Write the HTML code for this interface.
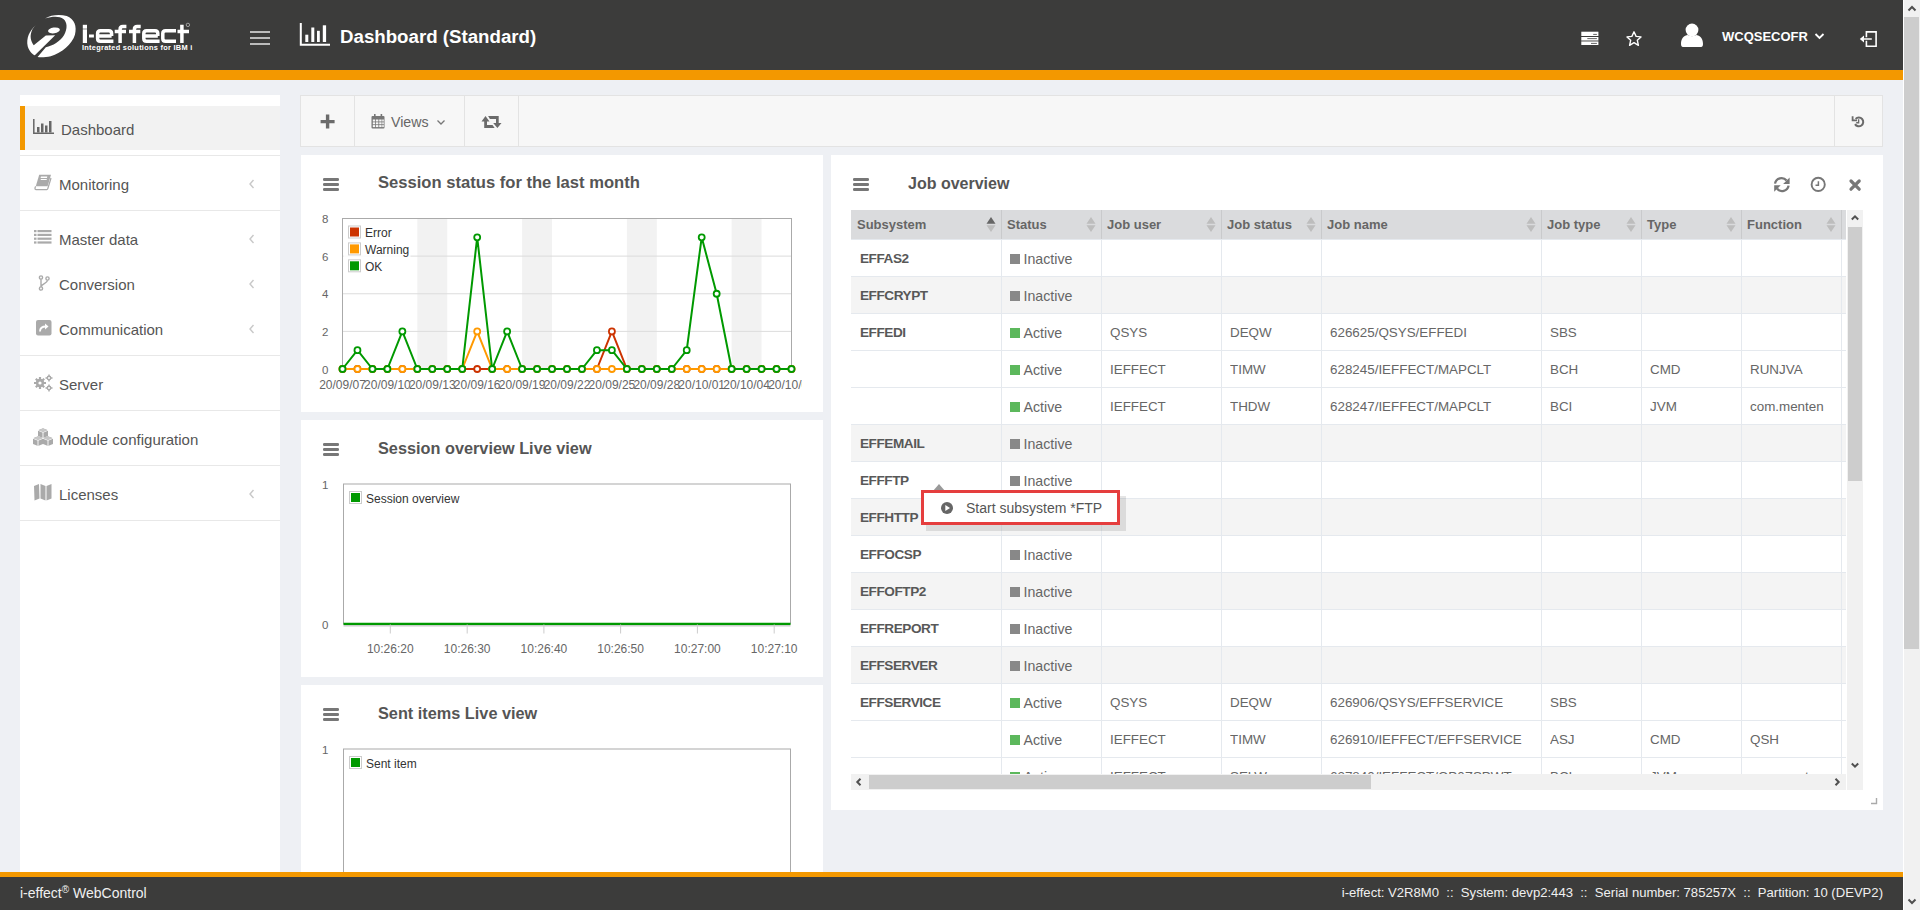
<!DOCTYPE html>
<html><head><meta charset="utf-8">
<style>
*{box-sizing:border-box;margin:0;padding:0}
html,body{width:1920px;height:910px;overflow:hidden}
body{font-family:"Liberation Sans",sans-serif;background:#eef0f4;position:relative;color:#555}
.a{position:absolute}
#hdr{left:0;top:0;width:1903px;height:70px;background:#3c3c3b}
#obar{left:0;top:70px;width:1903px;height:10px;background:#f39800}
#vsb{left:1903px;top:0;width:17px;height:910px;background:#f1f1f1;border-left:1px solid #fff}
#vsb .th{left:0;top:17px;width:15px;height:632px;background:#cdcdcd}
.ttl{color:#fff;font-weight:bold;white-space:nowrap}
#side{left:20px;top:95px;width:260px;height:782px;background:#fff}
.si{position:absolute;left:0;width:260px;font-size:15px;color:#555;white-space:nowrap;margin-top:1.5px}
.sep{position:absolute;left:0;width:260px;height:1px;background:#e8e8e8}
.chev{position:absolute;left:227px;color:#c8c8c8;margin-top:3px}
#tb{left:300px;top:95px;width:1583px;height:52px;background:#f7f7f7;border:1px solid #e3e3e3}
.dv{position:absolute;top:0;width:1px;height:50px;background:#e3e3e3}
.pnl{background:#fff}
.ptl{position:absolute;font-size:17px;font-weight:bold;color:#555;white-space:nowrap}
.ham{position:absolute;width:16px;height:13px}
.ham i{position:absolute;left:0;width:16px;height:2.6px;background:#777;border-radius:1.3px}
#ftr{left:0;top:877px;width:1903px;height:33px;background:#3c3c3b;color:#f0f0f0;font-size:14px}
#fbar{left:0;top:872px;width:1903px;height:5px;background:#f39800}
</style></head><body>
<div id="hdr" class="a">
<svg class="a" style="left:20px;top:10px" width="70" height="50" viewBox="0 0 1274 910">
<path fill="#fff" d="M290,275 C170,380 110,520 140,660 C170,760 230,810 270,825 L640,460 L470,462 L250,640 C190,560 180,470 210,390 C230,340 260,300 290,275 Z"/>
<path fill="#fff" d="M455,155 C560,90 720,75 850,110 C990,160 1040,300 1000,450 C950,620 760,780 560,840 C470,860 380,865 320,855 L470,680 C600,650 730,570 800,460 C870,340 860,220 790,165 C720,110 600,110 455,155 Z"/>
<ellipse fill="#fff" cx="618" cy="372" rx="108" ry="52" transform="rotate(-8 618 372)"/>
</svg>
<svg class="a" style="left:75px;top:15px" width="125" height="40" viewBox="75 15 125 40">
<g fill="#fff"><rect x="82.8" y="24.8" width="4.2" height="3.9"/><rect x="82.8" y="29.3" width="4.2" height="13.7"/><rect x="89" y="34.5" width="4.9" height="3"/></g>
<g stroke="#fff" stroke-width="3.5" fill="none" stroke-linejoin="round">
<path d="M111.6,36 V33.6 Q111.6,30.8 108.8,30.8 H100.4 Q97.6,30.8 97.6,33.6 V38.4 Q97.6,41.2 100.4,41.2 H113.4 M97.6,36 H111.6"/>
<path d="M120.1,43 V29.4 Q120.1,26.6 122.9,26.6 H126.4 M114.7,31.5 H126"/>
<path d="M134.4,43 V29.4 Q134.4,26.6 137.2,26.6 H140.7 M129,31.5 H140.3"/>
<path d="M157.8,36 V33.6 Q157.8,30.8 155,30.8 H146.6 Q143.8,30.8 143.8,33.6 V38.4 Q143.8,41.2 146.6,41.2 H159.6 M143.8,36 H157.8"/>
<path d="M176,30.8 H165.6 Q162.8,30.8 162.8,33.6 V38.4 Q162.8,41.2 165.6,41.2 H176"/>
<path d="M181.9,24.8 V43 M177.5,31.4 H189"/>
</g>
<circle cx="187.9" cy="24.9" r="1.7" stroke="#ddd" stroke-width="0.6" fill="none"/>
</svg>
<div class="a ttl" style="left:82px;top:43.5px;font-size:6.6px;letter-spacing:0.25px;transform:scaleX(1.12);transform-origin:0 0">Integrated solutions for IBM i</div>
<div class="a" style="left:250px;top:30.5px;width:20px;height:2px;background:#bbb"></div>
<div class="a" style="left:250px;top:36.5px;width:20px;height:2px;background:#bbb"></div>
<div class="a" style="left:250px;top:42.5px;width:20px;height:2px;background:#bbb"></div>
<svg class="a" style="left:299px;top:22px" width="32" height="25" viewBox="0 0 32 25">
<path d="M1.8 1 V22.7 H31" stroke="#fff" stroke-width="2" fill="none"/>
<rect x="6.3" y="12.7" width="3" height="7.3" fill="#fff"/><rect x="12.3" y="5.5" width="3" height="14.5" fill="#fff"/><rect x="18" y="8.8" width="2.8" height="11.2" fill="#fff"/><rect x="23.8" y="3.3" width="3.3" height="16.7" fill="#fff"/>
</svg>
<div class="a ttl" style="left:340px;top:25.5px;font-size:18.7px">Dashboard (Standard)</div>
<svg class="a" style="left:1581px;top:31px" width="18" height="15" viewBox="0 0 18 15">
<rect x="0.3" y="0.7" width="17.1" height="4.3" fill="#fff"/><rect x="0.3" y="6" width="17.1" height="3.1" fill="#fff"/><rect x="0.3" y="9.1" width="17.1" height="1.8" fill="#aaa"/><rect x="0.3" y="10.9" width="17.1" height="3.1" fill="#fff"/>
<rect x="12.2" y="2.9" width="3.7" height="1" fill="#666"/><rect x="6.3" y="7.1" width="9.6" height="1" fill="#666"/><rect x="10" y="11.9" width="5.9" height="1" fill="#666"/>
</svg>
<svg class="a" style="left:1625px;top:30px" width="18" height="17" viewBox="0 0 18 17">
<path d="M9 1.8 L11.1 6.4 L16 6.9 L12.3 10.2 L13.4 15.3 L9 12.6 L4.6 15.3 L5.7 10.2 L2 6.9 L6.9 6.4 Z" stroke="#fff" stroke-width="1.4" fill="none" stroke-linejoin="round"/>
</svg>
<svg class="a" style="left:1680px;top:23px" width="24" height="25" viewBox="0 0 24 25">
<circle cx="12" cy="7" r="6.4" fill="#fff"/>
<path d="M1 21 C1 15 4 12.5 8 12 C10 13.5 14 13.5 16 12 C20 12.5 23 15 23 21 C23 23.5 22 24 20 24 H4 C2 24 1 23.5 1 21 Z" fill="#fff"/>
</svg>
<div class="a ttl" style="left:1722px;top:28.5px;font-size:13px">WCQSECOFR</div>
<svg class="a" style="left:1814px;top:32px" width="11" height="8" viewBox="0 0 11 8"><path d="M1.5 2 L5.5 6 L9.5 2" stroke="#fff" stroke-width="1.8" fill="none"/></svg>
<svg class="a" style="left:1859px;top:30px" width="19" height="18" viewBox="0 0 19 18">
<path d="M7.4,7.2 V1.9 H17.1 V16.2 H7.4 V10.8" stroke="#fff" stroke-width="1.6" fill="none"/>
<path d="M0.8,9 L5,5.4 V12.6 Z" fill="#fff"/><rect x="4.5" y="8.1" width="8.3" height="1.8" fill="#ddd"/>
</svg>
</div>
<div id="obar" class="a"></div>
<div id="vsb" class="a"><div class="a th"></div>
<svg class="a" style="left:2px;top:4px" width="12" height="9" viewBox="0 0 12 9"><path d="M2.5 6.5 L6 3 L9.5 6.5" stroke="#505050" stroke-width="2" fill="none"/></svg>
<svg class="a" style="left:2px;top:897px" width="12" height="9" viewBox="0 0 12 9"><path d="M2.5 2.5 L6 6 L9.5 2.5" stroke="#505050" stroke-width="2" fill="none"/></svg>
</div>

<div id="side" class="a">
<div class="a" style="left:0;top:11px;width:260px;height:44px;background:#f2f2f2;border-left:5px solid #f39800"></div>
<div class="sep" style="top:60px"></div>
<div class="sep" style="top:115px"></div>
<div class="sep" style="top:260px"></div>
<div class="sep" style="top:315px"></div>
<div class="sep" style="top:370px"></div>
<div class="sep" style="top:425px"></div>
<svg class="a" style="left:13px;top:24px" width="21" height="15" viewBox="0 0 21 15">
<path d="M0.8 0 V14.2 H21" stroke="#666" stroke-width="1.5" fill="none"/>
<rect x="4" y="8" width="2.5" height="5.5" fill="#666"/><rect x="8" y="4.5" width="2.5" height="9" fill="#666"/><rect x="12" y="6.5" width="2.5" height="7" fill="#666"/><rect x="16" y="2" width="2.5" height="11.5" fill="#666"/>
</svg>
<div class="si" style="top:24px;left:41px">Dashboard</div>
<svg class="a" style="left:14px;top:79px" width="18" height="17" viewBox="0 0 18 17">
<path d="M5.2,0.8 H17 L13.6,12.2 H1.8 Z" fill="#aaa"/>
<path d="M2,12.6 C0.6,12.8 0.6,15.6 2,15.6 H12.8 C13.3,15.6 13.6,15.2 13.8,14.6 L17,4" stroke="#aaa" stroke-width="1.3" fill="none"/>
<rect x="7.6" y="2.6" width="6.4" height="1.3" fill="#fff" transform="skewX(-15)"/><rect x="8.2" y="5" width="6" height="1" fill="#fff" transform="skewX(-15)"/>
</svg>
<div class="si" style="top:79px;left:39px">Monitoring</div><div class="chev" style="top:79px"><svg width="10" height="14" viewBox="0 0 10 14"><path d="M6.5 3 L3 7 L6.5 11" stroke="#c8c8c8" stroke-width="1.4" fill="none"/></svg></div>
<svg class="a" style="left:14px;top:135px" width="18" height="14" viewBox="0 0 18 14">
<g fill="#aaa"><rect x="0" y="0" width="2.5" height="2.2"/><rect x="3.5" y="0" width="14" height="2.2"/><rect x="0" y="3.8" width="2.5" height="2.2"/><rect x="3.5" y="3.8" width="14" height="2.2"/><rect x="0" y="7.6" width="2.5" height="2.2"/><rect x="3.5" y="7.6" width="14" height="2.2"/><rect x="0" y="11.4" width="2.5" height="2.2"/><rect x="3.5" y="11.4" width="14" height="2.2"/></g>
</svg>
<div class="si" style="top:134px;left:39px">Master data</div><div class="chev" style="top:134px"><svg width="10" height="14" viewBox="0 0 10 14"><path d="M6.5 3 L3 7 L6.5 11" stroke="#c8c8c8" stroke-width="1.4" fill="none"/></svg></div>
<svg class="a" style="left:17.5px;top:179.5px" width="12" height="16" viewBox="0 0 12 16">
<g stroke="#aaa" stroke-width="1.4" fill="none"><circle cx="3" cy="2.5" r="1.6"/><circle cx="3" cy="13.5" r="1.6"/><circle cx="9.5" cy="3.5" r="1.6"/><path d="M3 4.2 V11.8 M9.5 5.2 C9.5 8.5 3.5 8.5 3 11.8"/></g>
</svg>
<div class="si" style="top:179px;left:39px">Conversion</div><div class="chev" style="top:179px"><svg width="10" height="14" viewBox="0 0 10 14"><path d="M6.5 3 L3 7 L6.5 11" stroke="#c8c8c8" stroke-width="1.4" fill="none"/></svg></div>
<svg class="a" style="left:15.5px;top:225px" width="16" height="16" viewBox="0 0 16 16">
<rect x="0" y="0" width="15.5" height="15.5" rx="2" fill="#aaa"/>
<path d="M4 11.5 C4 7.5 6.5 6.5 10 6.5" stroke="#fff" stroke-width="1.8" fill="none"/><path d="M9 3.5 L12.5 6.5 L9 9.5 Z" fill="#fff"/>
</svg>
<div class="si" style="top:224px;left:39px">Communication</div><div class="chev" style="top:224px"><svg width="10" height="14" viewBox="0 0 10 14"><path d="M6.5 3 L3 7 L6.5 11" stroke="#c8c8c8" stroke-width="1.4" fill="none"/></svg></div>
<svg class="a" style="left:13px;top:279px" width="20" height="18" viewBox="0 0 20 18">
<g fill="#aaa"><circle cx="7" cy="9" r="4.2"/><circle cx="16" cy="4" r="2.4"/><circle cx="16" cy="14" r="2.4"/></g>
<g stroke="#aaa" stroke-width="2.2"><path d="M7 3 V15 M1 9 H13 M2.8 4.8 L11.2 13.2 M11.2 4.8 L2.8 13.2"/><path d="M16 0.5 V7.5 M12.5 4 H19.5 M16 10.5 V17.5 M12.5 14 H19.5" stroke-width="1.4"/></g>
<g fill="#fff"><circle cx="7" cy="9" r="1.6"/><circle cx="16" cy="4" r="1"/><circle cx="16" cy="14" r="1"/></g>
</svg>
<div class="si" style="top:279px;left:39px">Server</div>
<svg class="a" style="left:12px;top:333px" width="22" height="19" viewBox="0 0 22 19">
<g fill="#aaa"><path d="M6,2.3 L11,0.3 L16,2.3 V8 L11,10 L6,8 Z"/><path d="M1,10.3 L6,8.3 L11,10.3 V16 L6,18 L1,16 Z"/><path d="M11,10.3 L16,8.3 L21,10.3 V16 L16,18 L11,16 Z"/></g>
<g stroke="#fff" stroke-width="0.9" fill="none"><path d="M6,2.3 L11,4.3 L16,2.3 M11,4.3 V10"/><path d="M1,10.3 L6,12.3 L11,10.3 M6,12.3 V18"/><path d="M11,10.3 L16,12.3 L21,10.3 M16,12.3 V18"/></g>
<g fill="#c8c8c8"><path d="M6.4,2.3 L11,0.6 L15.6,2.3 L11,4 Z"/><path d="M1.4,10.3 L6,8.6 L10.6,10.3 L6,12 Z"/><path d="M11.4,10.3 L16,8.6 L20.6,10.3 L16,12 Z"/></g>
</svg>
<div class="si" style="top:334px;left:39px">Module configuration</div>
<svg class="a" style="left:14px;top:389px" width="18" height="17" viewBox="0 0 18 17">
<path d="M0 2 L5 0 L5.5 14.5 L0.5 16.5 Z M6.5 0 L11.5 2 V16.5 L6.5 14.5 Z M12.5 2 L17.5 0 V14.5 L12.5 16.5 Z" fill="#aaa"/>
</svg>
<div class="si" style="top:389px;left:39px">Licenses</div><div class="chev" style="top:389px"><svg width="10" height="14" viewBox="0 0 10 14"><path d="M6.5 3 L3 7 L6.5 11" stroke="#c8c8c8" stroke-width="1.4" fill="none"/></svg></div>
</div>
<div id="tb" class="a">
<div class="dv" style="left:53px"></div><div class="dv" style="left:163px"></div><div class="dv" style="left:217px"></div><div class="dv" style="left:1533px"></div>
<svg class="a" style="left:19px;top:17.5px" width="16" height="16" viewBox="0 0 16 16"><path d="M5.9 0.6 H9.3 V5.9 H14.6 V9.3 H9.3 V14.6 H5.9 V9.3 H0.6 V5.9 H5.9 Z" fill="#6b6b6b"/></svg>
<svg class="a" style="left:70px;top:18px" width="15" height="15" viewBox="0 0 15 15">
<g fill="#777"><rect x="0.5" y="2" width="13" height="12.5" rx="1"/></g>
<g fill="#f7f7f7"><rect x="1.8" y="5.5" width="2.4" height="2"/><rect x="5" y="5.5" width="2.4" height="2"/><rect x="8.2" y="5.5" width="2.4" height="2"/><rect x="11.2" y="5.5" width="1.6" height="2"/>
<rect x="1.8" y="8.3" width="2.4" height="2"/><rect x="5" y="8.3" width="2.4" height="2"/><rect x="8.2" y="8.3" width="2.4" height="2"/><rect x="11.2" y="8.3" width="1.6" height="2"/>
<rect x="1.8" y="11.1" width="2.4" height="2"/><rect x="5" y="11.1" width="2.4" height="2"/><rect x="8.2" y="11.1" width="2.4" height="2"/><rect x="11.2" y="11.1" width="1.6" height="2"/></g>
<g fill="#777"><rect x="3" y="0" width="1.6" height="3.5"/><rect x="9.6" y="0" width="1.6" height="3.5"/></g>
</svg>
<div class="a" style="left:90px;top:17.7px;font-size:14.2px;color:#666;white-space:nowrap">Views</div>
<svg class="a" style="left:135px;top:22.7px" width="10" height="7" viewBox="0 0 10 7"><path d="M1.5 1.5 L5 5 L8.5 1.5" stroke="#777" stroke-width="1.3" fill="none"/></svg>
<svg class="a" style="left:180px;top:18px" width="22" height="15" viewBox="0 0 22 15">
<path d="M4.5,2 L8.5,7.5 H6 V11 H11.5 L13.7,13.9 H3.2 V7.5 H0.5 Z" fill="#6b6b6b"/>
<path d="M7.1,2 H17.7 V9.1 H20.5 L16.4,13.9 L12.2,9.1 H15 V4.9 H8.9 Z" fill="#6b6b6b"/>
</svg>
<svg class="a" style="left:1549px;top:18px" width="15" height="15" viewBox="0 0 15 15">
<path d="M5.6,4.9 A4.4,4.4 0 1 1 5.04,10.12" stroke="#6b6b6b" stroke-width="2" fill="none"/>
<path d="M2.6,2.2 V6.3 H7" stroke="#6b6b6b" stroke-width="1.8" fill="none"/>
<path d="M8.6,5.2 V8.7 H6.2" stroke="#6b6b6b" stroke-width="1.4" fill="none"/>
</svg>
</div>

<!--PANELS-->
<div class="a pnl" style="left:301px;top:155px;width:522px;height:257px"></div>
<svg class="a" style="left:301px;top:155px" width="522" height="257" viewBox="301 155 522 257" font-family="Liberation Sans" >
<defs><clipPath id="xc"><rect x="301" y="370" width="501" height="30"/></clipPath></defs>
<rect x="417.33" y="218.5" width="29.93" height="150.5" fill="#f2f2f2"/>
<rect x="522.10" y="218.5" width="29.93" height="150.5" fill="#f2f2f2"/>
<rect x="626.87" y="218.5" width="29.93" height="150.5" fill="#f2f2f2"/>
<rect x="731.63" y="218.5" width="29.93" height="150.5" fill="#f2f2f2"/>
<line x1="342.5" x2="791.5" y1="331.38" y2="331.38" stroke="#dcdcdc" stroke-width="1"/>
<line x1="342.5" x2="791.5" y1="293.75" y2="293.75" stroke="#dcdcdc" stroke-width="1"/>
<line x1="342.5" x2="791.5" y1="256.12" y2="256.12" stroke="#dcdcdc" stroke-width="1"/>
<rect x="342.5" y="218.5" width="449.0" height="150.5" fill="none" stroke="#aaa" stroke-width="1"/>
<text x="328.5" y="373.50" text-anchor="end" font-size="11.5" fill="#666">0</text>
<text x="328.5" y="335.88" text-anchor="end" font-size="11.5" fill="#666">2</text>
<text x="328.5" y="298.25" text-anchor="end" font-size="11.5" fill="#666">4</text>
<text x="328.5" y="260.62" text-anchor="end" font-size="11.5" fill="#666">6</text>
<text x="328.5" y="223.00" text-anchor="end" font-size="11.5" fill="#666">8</text>
<text x="342.50" y="389" text-anchor="middle" font-size="12" fill="#666" clip-path="url(#xc)">20/09/07</text>
<text x="387.40" y="389" text-anchor="middle" font-size="12" fill="#666" clip-path="url(#xc)">20/09/10</text>
<text x="432.30" y="389" text-anchor="middle" font-size="12" fill="#666" clip-path="url(#xc)">20/09/13</text>
<text x="477.20" y="389" text-anchor="middle" font-size="12" fill="#666" clip-path="url(#xc)">20/09/16</text>
<text x="522.10" y="389" text-anchor="middle" font-size="12" fill="#666" clip-path="url(#xc)">20/09/19</text>
<text x="567.00" y="389" text-anchor="middle" font-size="12" fill="#666" clip-path="url(#xc)">20/09/22</text>
<text x="611.90" y="389" text-anchor="middle" font-size="12" fill="#666" clip-path="url(#xc)">20/09/25</text>
<text x="656.80" y="389" text-anchor="middle" font-size="12" fill="#666" clip-path="url(#xc)">20/09/28</text>
<text x="701.70" y="389" text-anchor="middle" font-size="12" fill="#666" clip-path="url(#xc)">20/10/01</text>
<text x="746.60" y="389" text-anchor="middle" font-size="12" fill="#666" clip-path="url(#xc)">20/10/04</text>
<text x="791.50" y="389" text-anchor="middle" font-size="12" fill="#666" clip-path="url(#xc)">20/10/07</text>
<polyline points="342.50,369.00 357.47,369.00 372.43,369.00 387.40,369.00 402.37,369.00 417.33,369.00 432.30,369.00 447.27,369.00 462.23,369.00 477.20,369.00 492.17,369.00 507.13,369.00 522.10,369.00 537.07,369.00 552.03,369.00 567.00,369.00 581.97,369.00 596.93,369.00 611.90,331.38 626.87,369.00 641.83,369.00 656.80,369.00 671.77,369.00 686.73,369.00 701.70,369.00 716.67,369.00 731.63,369.00 746.60,369.00 761.57,369.00 776.53,369.00 791.50,369.00" fill="none" stroke="#cc3300" stroke-width="2" stroke-linejoin="round"/>
<circle cx="342.50" cy="369.00" r="3" fill="#fff" stroke="#cc3300" stroke-width="1.8"/>
<circle cx="357.47" cy="369.00" r="3" fill="#fff" stroke="#cc3300" stroke-width="1.8"/>
<circle cx="372.43" cy="369.00" r="3" fill="#fff" stroke="#cc3300" stroke-width="1.8"/>
<circle cx="387.40" cy="369.00" r="3" fill="#fff" stroke="#cc3300" stroke-width="1.8"/>
<circle cx="402.37" cy="369.00" r="3" fill="#fff" stroke="#cc3300" stroke-width="1.8"/>
<circle cx="417.33" cy="369.00" r="3" fill="#fff" stroke="#cc3300" stroke-width="1.8"/>
<circle cx="432.30" cy="369.00" r="3" fill="#fff" stroke="#cc3300" stroke-width="1.8"/>
<circle cx="447.27" cy="369.00" r="3" fill="#fff" stroke="#cc3300" stroke-width="1.8"/>
<circle cx="462.23" cy="369.00" r="3" fill="#fff" stroke="#cc3300" stroke-width="1.8"/>
<circle cx="477.20" cy="369.00" r="3" fill="#fff" stroke="#cc3300" stroke-width="1.8"/>
<circle cx="492.17" cy="369.00" r="3" fill="#fff" stroke="#cc3300" stroke-width="1.8"/>
<circle cx="507.13" cy="369.00" r="3" fill="#fff" stroke="#cc3300" stroke-width="1.8"/>
<circle cx="522.10" cy="369.00" r="3" fill="#fff" stroke="#cc3300" stroke-width="1.8"/>
<circle cx="537.07" cy="369.00" r="3" fill="#fff" stroke="#cc3300" stroke-width="1.8"/>
<circle cx="552.03" cy="369.00" r="3" fill="#fff" stroke="#cc3300" stroke-width="1.8"/>
<circle cx="567.00" cy="369.00" r="3" fill="#fff" stroke="#cc3300" stroke-width="1.8"/>
<circle cx="581.97" cy="369.00" r="3" fill="#fff" stroke="#cc3300" stroke-width="1.8"/>
<circle cx="596.93" cy="369.00" r="3" fill="#fff" stroke="#cc3300" stroke-width="1.8"/>
<circle cx="611.90" cy="331.38" r="3" fill="#fff" stroke="#cc3300" stroke-width="1.8"/>
<circle cx="626.87" cy="369.00" r="3" fill="#fff" stroke="#cc3300" stroke-width="1.8"/>
<circle cx="641.83" cy="369.00" r="3" fill="#fff" stroke="#cc3300" stroke-width="1.8"/>
<circle cx="656.80" cy="369.00" r="3" fill="#fff" stroke="#cc3300" stroke-width="1.8"/>
<circle cx="671.77" cy="369.00" r="3" fill="#fff" stroke="#cc3300" stroke-width="1.8"/>
<circle cx="686.73" cy="369.00" r="3" fill="#fff" stroke="#cc3300" stroke-width="1.8"/>
<circle cx="701.70" cy="369.00" r="3" fill="#fff" stroke="#cc3300" stroke-width="1.8"/>
<circle cx="716.67" cy="369.00" r="3" fill="#fff" stroke="#cc3300" stroke-width="1.8"/>
<circle cx="731.63" cy="369.00" r="3" fill="#fff" stroke="#cc3300" stroke-width="1.8"/>
<circle cx="746.60" cy="369.00" r="3" fill="#fff" stroke="#cc3300" stroke-width="1.8"/>
<circle cx="761.57" cy="369.00" r="3" fill="#fff" stroke="#cc3300" stroke-width="1.8"/>
<circle cx="776.53" cy="369.00" r="3" fill="#fff" stroke="#cc3300" stroke-width="1.8"/>
<circle cx="791.50" cy="369.00" r="3" fill="#fff" stroke="#cc3300" stroke-width="1.8"/>
<polyline points="342.50,369.00 357.47,369.00 372.43,369.00 387.40,369.00 402.37,369.00 417.33,369.00 432.30,369.00 447.27,369.00 462.23,369.00 477.20,331.38 492.17,369.00 507.13,369.00 522.10,369.00 537.07,369.00 552.03,369.00 567.00,369.00 581.97,369.00 596.93,369.00 611.90,369.00 626.87,369.00 641.83,369.00 656.80,369.00 671.77,369.00 686.73,369.00 701.70,369.00 716.67,369.00 731.63,369.00 746.60,369.00 761.57,369.00 776.53,369.00 791.50,369.00" fill="none" stroke="#ff9900" stroke-width="2" stroke-linejoin="round"/>
<circle cx="342.50" cy="369.00" r="3" fill="#fff" stroke="#ff9900" stroke-width="1.8"/>
<circle cx="357.47" cy="369.00" r="3" fill="#fff" stroke="#ff9900" stroke-width="1.8"/>
<circle cx="372.43" cy="369.00" r="3" fill="#fff" stroke="#ff9900" stroke-width="1.8"/>
<circle cx="387.40" cy="369.00" r="3" fill="#fff" stroke="#ff9900" stroke-width="1.8"/>
<circle cx="402.37" cy="369.00" r="3" fill="#fff" stroke="#ff9900" stroke-width="1.8"/>
<circle cx="417.33" cy="369.00" r="3" fill="#fff" stroke="#ff9900" stroke-width="1.8"/>
<circle cx="432.30" cy="369.00" r="3" fill="#fff" stroke="#ff9900" stroke-width="1.8"/>
<circle cx="447.27" cy="369.00" r="3" fill="#fff" stroke="#ff9900" stroke-width="1.8"/>
<circle cx="462.23" cy="369.00" r="3" fill="#fff" stroke="#ff9900" stroke-width="1.8"/>
<circle cx="477.20" cy="331.38" r="3" fill="#fff" stroke="#ff9900" stroke-width="1.8"/>
<circle cx="492.17" cy="369.00" r="3" fill="#fff" stroke="#ff9900" stroke-width="1.8"/>
<circle cx="507.13" cy="369.00" r="3" fill="#fff" stroke="#ff9900" stroke-width="1.8"/>
<circle cx="522.10" cy="369.00" r="3" fill="#fff" stroke="#ff9900" stroke-width="1.8"/>
<circle cx="537.07" cy="369.00" r="3" fill="#fff" stroke="#ff9900" stroke-width="1.8"/>
<circle cx="552.03" cy="369.00" r="3" fill="#fff" stroke="#ff9900" stroke-width="1.8"/>
<circle cx="567.00" cy="369.00" r="3" fill="#fff" stroke="#ff9900" stroke-width="1.8"/>
<circle cx="581.97" cy="369.00" r="3" fill="#fff" stroke="#ff9900" stroke-width="1.8"/>
<circle cx="596.93" cy="369.00" r="3" fill="#fff" stroke="#ff9900" stroke-width="1.8"/>
<circle cx="611.90" cy="369.00" r="3" fill="#fff" stroke="#ff9900" stroke-width="1.8"/>
<circle cx="626.87" cy="369.00" r="3" fill="#fff" stroke="#ff9900" stroke-width="1.8"/>
<circle cx="641.83" cy="369.00" r="3" fill="#fff" stroke="#ff9900" stroke-width="1.8"/>
<circle cx="656.80" cy="369.00" r="3" fill="#fff" stroke="#ff9900" stroke-width="1.8"/>
<circle cx="671.77" cy="369.00" r="3" fill="#fff" stroke="#ff9900" stroke-width="1.8"/>
<circle cx="686.73" cy="369.00" r="3" fill="#fff" stroke="#ff9900" stroke-width="1.8"/>
<circle cx="701.70" cy="369.00" r="3" fill="#fff" stroke="#ff9900" stroke-width="1.8"/>
<circle cx="716.67" cy="369.00" r="3" fill="#fff" stroke="#ff9900" stroke-width="1.8"/>
<circle cx="731.63" cy="369.00" r="3" fill="#fff" stroke="#ff9900" stroke-width="1.8"/>
<circle cx="746.60" cy="369.00" r="3" fill="#fff" stroke="#ff9900" stroke-width="1.8"/>
<circle cx="761.57" cy="369.00" r="3" fill="#fff" stroke="#ff9900" stroke-width="1.8"/>
<circle cx="776.53" cy="369.00" r="3" fill="#fff" stroke="#ff9900" stroke-width="1.8"/>
<circle cx="791.50" cy="369.00" r="3" fill="#fff" stroke="#ff9900" stroke-width="1.8"/>
<polyline points="342.50,369.00 357.47,350.19 372.43,369.00 387.40,369.00 402.37,331.38 417.33,369.00 432.30,369.00 447.27,369.00 462.23,369.00 477.20,237.31 492.17,369.00 507.13,331.38 522.10,369.00 537.07,369.00 552.03,369.00 567.00,369.00 581.97,369.00 596.93,350.19 611.90,350.19 626.87,369.00 641.83,369.00 656.80,369.00 671.77,369.00 686.73,350.19 701.70,237.31 716.67,293.75 731.63,369.00 746.60,369.00 761.57,369.00 776.53,369.00 791.50,369.00" fill="none" stroke="#009900" stroke-width="2" stroke-linejoin="round"/>
<circle cx="342.50" cy="369.00" r="3" fill="#fff" stroke="#009900" stroke-width="1.8"/>
<circle cx="357.47" cy="350.19" r="3" fill="#fff" stroke="#009900" stroke-width="1.8"/>
<circle cx="372.43" cy="369.00" r="3" fill="#fff" stroke="#009900" stroke-width="1.8"/>
<circle cx="387.40" cy="369.00" r="3" fill="#fff" stroke="#009900" stroke-width="1.8"/>
<circle cx="402.37" cy="331.38" r="3" fill="#fff" stroke="#009900" stroke-width="1.8"/>
<circle cx="417.33" cy="369.00" r="3" fill="#fff" stroke="#009900" stroke-width="1.8"/>
<circle cx="432.30" cy="369.00" r="3" fill="#fff" stroke="#009900" stroke-width="1.8"/>
<circle cx="447.27" cy="369.00" r="3" fill="#fff" stroke="#009900" stroke-width="1.8"/>
<circle cx="462.23" cy="369.00" r="3" fill="#fff" stroke="#009900" stroke-width="1.8"/>
<circle cx="477.20" cy="237.31" r="3" fill="#fff" stroke="#009900" stroke-width="1.8"/>
<circle cx="492.17" cy="369.00" r="3" fill="#fff" stroke="#009900" stroke-width="1.8"/>
<circle cx="507.13" cy="331.38" r="3" fill="#fff" stroke="#009900" stroke-width="1.8"/>
<circle cx="522.10" cy="369.00" r="3" fill="#fff" stroke="#009900" stroke-width="1.8"/>
<circle cx="537.07" cy="369.00" r="3" fill="#fff" stroke="#009900" stroke-width="1.8"/>
<circle cx="552.03" cy="369.00" r="3" fill="#fff" stroke="#009900" stroke-width="1.8"/>
<circle cx="567.00" cy="369.00" r="3" fill="#fff" stroke="#009900" stroke-width="1.8"/>
<circle cx="581.97" cy="369.00" r="3" fill="#fff" stroke="#009900" stroke-width="1.8"/>
<circle cx="596.93" cy="350.19" r="3" fill="#fff" stroke="#009900" stroke-width="1.8"/>
<circle cx="611.90" cy="350.19" r="3" fill="#fff" stroke="#009900" stroke-width="1.8"/>
<circle cx="626.87" cy="369.00" r="3" fill="#fff" stroke="#009900" stroke-width="1.8"/>
<circle cx="641.83" cy="369.00" r="3" fill="#fff" stroke="#009900" stroke-width="1.8"/>
<circle cx="656.80" cy="369.00" r="3" fill="#fff" stroke="#009900" stroke-width="1.8"/>
<circle cx="671.77" cy="369.00" r="3" fill="#fff" stroke="#009900" stroke-width="1.8"/>
<circle cx="686.73" cy="350.19" r="3" fill="#fff" stroke="#009900" stroke-width="1.8"/>
<circle cx="701.70" cy="237.31" r="3" fill="#fff" stroke="#009900" stroke-width="1.8"/>
<circle cx="716.67" cy="293.75" r="3" fill="#fff" stroke="#009900" stroke-width="1.8"/>
<circle cx="731.63" cy="369.00" r="3" fill="#fff" stroke="#009900" stroke-width="1.8"/>
<circle cx="746.60" cy="369.00" r="3" fill="#fff" stroke="#009900" stroke-width="1.8"/>
<circle cx="761.57" cy="369.00" r="3" fill="#fff" stroke="#009900" stroke-width="1.8"/>
<circle cx="776.53" cy="369.00" r="3" fill="#fff" stroke="#009900" stroke-width="1.8"/>
<circle cx="791.50" cy="369.00" r="3" fill="#fff" stroke="#009900" stroke-width="1.8"/>
<rect x="343.5" y="219.5" width="67" height="55" fill="#fff" fill-opacity="0.85"/>
<rect x="348.5" y="226.00" width="12" height="12" fill="#fff" stroke="#ccc" stroke-width="1"/>
<rect x="350" y="227.50" width="9" height="9" fill="#cc3300"/>
<text x="365" y="237.00" font-size="12" fill="#333">Error</text>
<rect x="348.5" y="242.90" width="12" height="12" fill="#fff" stroke="#ccc" stroke-width="1"/>
<rect x="350" y="244.40" width="9" height="9" fill="#ff9900"/>
<text x="365" y="253.90" font-size="12" fill="#333">Warning</text>
<rect x="348.5" y="259.80" width="12" height="12" fill="#fff" stroke="#ccc" stroke-width="1"/>
<rect x="350" y="261.30" width="9" height="9" fill="#009900"/>
<text x="365" y="270.80" font-size="12" fill="#333">OK</text>
</svg>
<div class="ham" style="left:323px;top:178px"><i style="top:0"></i><i style="top:5px"></i><i style="top:10px"></i></div>
<div class="ptl" style="left:378px;top:173px;font-size:16.6px">Session status for the last month</div>
<div class="a pnl" style="left:301px;top:420px;width:522px;height:257px"></div>
<svg class="a" style="left:301px;top:420px" width="522" height="257" viewBox="301 420 522 257" font-family="Liberation Sans">
<rect x="343.5" y="484" width="447.0" height="139.5" fill="none" stroke="#aaa" stroke-width="1"/>
<text x="328.5" y="489" text-anchor="end" font-size="11.5" fill="#666">1</text>
<text x="328.5" y="628.5" text-anchor="end" font-size="11.5" fill="#666">0</text>
<line x1="343.5" x2="790.5" y1="625.0" y2="625.0" stroke="#ccc" stroke-width="3"/>
<line x1="343.5" x2="790.5" y1="623.8" y2="623.8" stroke="#009900" stroke-width="2.2"/>
<line x1="390.3" x2="390.3" y1="624.5" y2="633.5" stroke="#ccc" stroke-width="1"/>
<text x="390.3" y="652.5" text-anchor="middle" font-size="12" fill="#666">10:26:20</text>
<line x1="467.2" x2="467.2" y1="624.5" y2="633.5" stroke="#ccc" stroke-width="1"/>
<text x="467.2" y="652.5" text-anchor="middle" font-size="12" fill="#666">10:26:30</text>
<line x1="543.9" x2="543.9" y1="624.5" y2="633.5" stroke="#ccc" stroke-width="1"/>
<text x="543.9" y="652.5" text-anchor="middle" font-size="12" fill="#666">10:26:40</text>
<line x1="620.6" x2="620.6" y1="624.5" y2="633.5" stroke="#ccc" stroke-width="1"/>
<text x="620.6" y="652.5" text-anchor="middle" font-size="12" fill="#666">10:26:50</text>
<line x1="697.4" x2="697.4" y1="624.5" y2="633.5" stroke="#ccc" stroke-width="1"/>
<text x="697.4" y="652.5" text-anchor="middle" font-size="12" fill="#666">10:27:00</text>
<line x1="774.2" x2="774.2" y1="624.5" y2="633.5" stroke="#ccc" stroke-width="1"/>
<text x="774.2" y="652.5" text-anchor="middle" font-size="12" fill="#666">10:27:10</text>
<rect x="349.5" y="491.5" width="12" height="12" fill="#fff" stroke="#ccc" stroke-width="1"/>
<rect x="351" y="493.0" width="9" height="9" fill="#009900"/>
<text x="366" y="502.5" font-size="12" fill="#333">Session overview</text>
</svg>
<div class="ham" style="left:323px;top:443px"><i style="top:0"></i><i style="top:5px"></i><i style="top:10px"></i></div>
<div class="ptl" style="left:378px;top:438.5px;font-size:16.3px">Session overview Live view</div>
<div class="a pnl" style="left:301px;top:685px;width:522px;height:192px"></div>
<svg class="a" style="left:301px;top:685px" width="522" height="192" viewBox="301 685 522 192" font-family="Liberation Sans">
<rect x="343.5" y="749" width="447.0" height="151" fill="none" stroke="#aaa" stroke-width="1"/>
<text x="328.5" y="754" text-anchor="end" font-size="11.5" fill="#666">1</text>
<rect x="349.5" y="756.5" width="12" height="12" fill="#fff" stroke="#ccc" stroke-width="1"/>
<rect x="351" y="758.0" width="9" height="9" fill="#009900"/>
<text x="366" y="767.5" font-size="12" fill="#333">Sent item</text>
</svg>
<div class="ham" style="left:323px;top:708px"><i style="top:0"></i><i style="top:5px"></i><i style="top:10px"></i></div>
<div class="ptl" style="left:378px;top:703.5px;font-size:16.3px">Sent items Live view</div>
<div class="a pnl" style="left:831px;top:155px;width:1052px;height:655px;overflow:hidden">
<div class="ham" style="left:22px;top:23px"><i style="top:0"></i><i style="top:5px"></i><i style="top:10px"></i></div>
<div class="ptl" style="left:77px;top:19.5px;font-size:16px">Job overview</div>
<svg class="a" style="left:942px;top:21px" width="18" height="17" viewBox="0 0 18 17">
<path d="M2,7.6 A6.6,6.6 0 0 1 13.6,4.6" stroke="#777" stroke-width="2.3" fill="none"/>
<path d="M16.6,1.5 V8 H10.1 Z" fill="#777"/>
<path d="M15.6,9.6 A6.6,6.6 0 0 1 4,12.6" stroke="#777" stroke-width="2.3" fill="none"/>
<path d="M1.2,15.8 V9.3 H7.7 Z" fill="#777"/>
</svg>
<svg class="a" style="left:979px;top:21px" width="17" height="17" viewBox="0 0 17 17">
<circle cx="8.2" cy="8.4" r="6.6" stroke="#777" stroke-width="1.9" fill="none"/>
<path d="M8.4,5.2 V9.3 H5.5" stroke="#777" stroke-width="1.5" fill="none"/>
</svg>
<svg class="a" style="left:1017px;top:23px" width="15" height="15" viewBox="0 0 15 15">
<path d="M3,3 L11.2,11.2 M11.2,3 L3,11.2" stroke="#777" stroke-width="3.2" stroke-linecap="round"/>
</svg>
<div class="a" style="left:20px;top:55px;width:995px;height:564px;overflow:hidden">
<div class="a" style="left:0;top:0;width:1000px;height:30px;background:#dadbdd;border-bottom:1px solid #e5e9ee"></div>
<div class="a" style="left:6px;top:7px;font-size:13px;font-weight:bold;color:#666;white-space:nowrap">Subsystem</div>
<svg class="a" style="left:135px;top:7px" width="10" height="15" viewBox="0 0 10 15"><path d="M0.5,6.8 L5,0 L9.5,6.8 Z" fill="#666"/><path d="M0.5,8.2 L5,15 L9.5,8.2 Z" fill="#bdbdbd"/></svg>
<div class="a" style="left:150px;top:0;width:1px;height:29px;background:#c9cacc"></div>
<div class="a" style="left:156px;top:7px;font-size:13px;font-weight:bold;color:#666;white-space:nowrap">Status</div>
<svg class="a" style="left:235px;top:7px" width="10" height="15" viewBox="0 0 10 15"><path d="M0.5,6.8 L5,0 L9.5,6.8 Z" fill="#bdbdbd"/><path d="M0.5,8.2 L5,15 L9.5,8.2 Z" fill="#bdbdbd"/></svg>
<div class="a" style="left:250px;top:0;width:1px;height:29px;background:#c9cacc"></div>
<div class="a" style="left:256px;top:7px;font-size:13px;font-weight:bold;color:#666;white-space:nowrap">Job user</div>
<svg class="a" style="left:355px;top:7px" width="10" height="15" viewBox="0 0 10 15"><path d="M0.5,6.8 L5,0 L9.5,6.8 Z" fill="#bdbdbd"/><path d="M0.5,8.2 L5,15 L9.5,8.2 Z" fill="#bdbdbd"/></svg>
<div class="a" style="left:370px;top:0;width:1px;height:29px;background:#c9cacc"></div>
<div class="a" style="left:376px;top:7px;font-size:13px;font-weight:bold;color:#666;white-space:nowrap">Job status</div>
<svg class="a" style="left:455px;top:7px" width="10" height="15" viewBox="0 0 10 15"><path d="M0.5,6.8 L5,0 L9.5,6.8 Z" fill="#bdbdbd"/><path d="M0.5,8.2 L5,15 L9.5,8.2 Z" fill="#bdbdbd"/></svg>
<div class="a" style="left:470px;top:0;width:1px;height:29px;background:#c9cacc"></div>
<div class="a" style="left:476px;top:7px;font-size:13px;font-weight:bold;color:#666;white-space:nowrap">Job name</div>
<svg class="a" style="left:675px;top:7px" width="10" height="15" viewBox="0 0 10 15"><path d="M0.5,6.8 L5,0 L9.5,6.8 Z" fill="#bdbdbd"/><path d="M0.5,8.2 L5,15 L9.5,8.2 Z" fill="#bdbdbd"/></svg>
<div class="a" style="left:690px;top:0;width:1px;height:29px;background:#c9cacc"></div>
<div class="a" style="left:696px;top:7px;font-size:13px;font-weight:bold;color:#666;white-space:nowrap">Job type</div>
<svg class="a" style="left:775px;top:7px" width="10" height="15" viewBox="0 0 10 15"><path d="M0.5,6.8 L5,0 L9.5,6.8 Z" fill="#bdbdbd"/><path d="M0.5,8.2 L5,15 L9.5,8.2 Z" fill="#bdbdbd"/></svg>
<div class="a" style="left:790px;top:0;width:1px;height:29px;background:#c9cacc"></div>
<div class="a" style="left:796px;top:7px;font-size:13px;font-weight:bold;color:#666;white-space:nowrap">Type</div>
<svg class="a" style="left:875px;top:7px" width="10" height="15" viewBox="0 0 10 15"><path d="M0.5,6.8 L5,0 L9.5,6.8 Z" fill="#bdbdbd"/><path d="M0.5,8.2 L5,15 L9.5,8.2 Z" fill="#bdbdbd"/></svg>
<div class="a" style="left:890px;top:0;width:1px;height:29px;background:#c9cacc"></div>
<div class="a" style="left:896px;top:7px;font-size:13px;font-weight:bold;color:#666;white-space:nowrap">Function</div>
<svg class="a" style="left:975px;top:7px" width="10" height="15" viewBox="0 0 10 15"><path d="M0.5,6.8 L5,0 L9.5,6.8 Z" fill="#bdbdbd"/><path d="M0.5,8.2 L5,15 L9.5,8.2 Z" fill="#bdbdbd"/></svg>
<div class="a" style="left:990px;top:0;width:1px;height:29px;background:#c9cacc"></div>
<div class="a" style="left:1090px;top:0;width:1px;height:29px;background:#c9cacc"></div>
<div class="a" style="left:0;top:30px;width:995px;height:37px;background:#fff;border-bottom:1px solid #e5e9ee"></div>
<div class="a" style="left:9px;top:40.5px;font-size:13.6px;letter-spacing:-0.45px;font-weight:bold;color:#585858;white-space:nowrap">EFFAS2</div>
<div class="a" style="left:158.5px;top:43.5px;width:10px;height:10px;background:#888"></div>
<div class="a" style="left:172.5px;top:40.5px;font-size:14.2px;color:#666;white-space:nowrap">Inactive</div>
<div class="a" style="left:150px;top:30px;width:1px;height:37px;background:#e5e9ee"></div>
<div class="a" style="left:250px;top:30px;width:1px;height:37px;background:#e5e9ee"></div>
<div class="a" style="left:370px;top:30px;width:1px;height:37px;background:#e5e9ee"></div>
<div class="a" style="left:470px;top:30px;width:1px;height:37px;background:#e5e9ee"></div>
<div class="a" style="left:690px;top:30px;width:1px;height:37px;background:#e5e9ee"></div>
<div class="a" style="left:790px;top:30px;width:1px;height:37px;background:#e5e9ee"></div>
<div class="a" style="left:890px;top:30px;width:1px;height:37px;background:#e5e9ee"></div>
<div class="a" style="left:990px;top:30px;width:1px;height:37px;background:#e5e9ee"></div>
<div class="a" style="left:0;top:67px;width:995px;height:37px;background:#f4f4f4;border-bottom:1px solid #e5e9ee"></div>
<div class="a" style="left:9px;top:77.5px;font-size:13.6px;letter-spacing:-0.45px;font-weight:bold;color:#585858;white-space:nowrap">EFFCRYPT</div>
<div class="a" style="left:158.5px;top:80.5px;width:10px;height:10px;background:#888"></div>
<div class="a" style="left:172.5px;top:77.5px;font-size:14.2px;color:#666;white-space:nowrap">Inactive</div>
<div class="a" style="left:150px;top:67px;width:1px;height:37px;background:#e5e9ee"></div>
<div class="a" style="left:250px;top:67px;width:1px;height:37px;background:#e5e9ee"></div>
<div class="a" style="left:370px;top:67px;width:1px;height:37px;background:#e5e9ee"></div>
<div class="a" style="left:470px;top:67px;width:1px;height:37px;background:#e5e9ee"></div>
<div class="a" style="left:690px;top:67px;width:1px;height:37px;background:#e5e9ee"></div>
<div class="a" style="left:790px;top:67px;width:1px;height:37px;background:#e5e9ee"></div>
<div class="a" style="left:890px;top:67px;width:1px;height:37px;background:#e5e9ee"></div>
<div class="a" style="left:990px;top:67px;width:1px;height:37px;background:#e5e9ee"></div>
<div class="a" style="left:0;top:104px;width:995px;height:37px;background:#fff;border-bottom:1px solid #e5e9ee"></div>
<div class="a" style="left:9px;top:114.5px;font-size:13.6px;letter-spacing:-0.45px;font-weight:bold;color:#585858;white-space:nowrap">EFFEDI</div>
<div class="a" style="left:158.5px;top:117.5px;width:10px;height:10px;background:#5cb85c"></div>
<div class="a" style="left:172.5px;top:114.5px;font-size:14.2px;color:#666;white-space:nowrap">Active</div>
<div class="a" style="left:259px;top:114.5px;font-size:13.4px;color:#666;white-space:nowrap;width:111px;overflow:hidden">QSYS</div>
<div class="a" style="left:379px;top:114.5px;font-size:13.4px;color:#666;white-space:nowrap;width:91px;overflow:hidden">DEQW</div>
<div class="a" style="left:479px;top:114.5px;font-size:13.4px;color:#666;white-space:nowrap;width:211px;overflow:hidden">626625/QSYS/EFFEDI</div>
<div class="a" style="left:699px;top:114.5px;font-size:13.4px;color:#666;white-space:nowrap;width:91px;overflow:hidden">SBS</div>
<div class="a" style="left:150px;top:104px;width:1px;height:37px;background:#e5e9ee"></div>
<div class="a" style="left:250px;top:104px;width:1px;height:37px;background:#e5e9ee"></div>
<div class="a" style="left:370px;top:104px;width:1px;height:37px;background:#e5e9ee"></div>
<div class="a" style="left:470px;top:104px;width:1px;height:37px;background:#e5e9ee"></div>
<div class="a" style="left:690px;top:104px;width:1px;height:37px;background:#e5e9ee"></div>
<div class="a" style="left:790px;top:104px;width:1px;height:37px;background:#e5e9ee"></div>
<div class="a" style="left:890px;top:104px;width:1px;height:37px;background:#e5e9ee"></div>
<div class="a" style="left:990px;top:104px;width:1px;height:37px;background:#e5e9ee"></div>
<div class="a" style="left:0;top:141px;width:995px;height:37px;background:#fff;border-bottom:1px solid #e5e9ee"></div>
<div class="a" style="left:158.5px;top:154.5px;width:10px;height:10px;background:#5cb85c"></div>
<div class="a" style="left:172.5px;top:151.5px;font-size:14.2px;color:#666;white-space:nowrap">Active</div>
<div class="a" style="left:259px;top:151.5px;font-size:13.4px;color:#666;white-space:nowrap;width:111px;overflow:hidden">IEFFECT</div>
<div class="a" style="left:379px;top:151.5px;font-size:13.4px;color:#666;white-space:nowrap;width:91px;overflow:hidden">TIMW</div>
<div class="a" style="left:479px;top:151.5px;font-size:13.4px;color:#666;white-space:nowrap;width:211px;overflow:hidden">628245/IEFFECT/MAPCLT</div>
<div class="a" style="left:699px;top:151.5px;font-size:13.4px;color:#666;white-space:nowrap;width:91px;overflow:hidden">BCH</div>
<div class="a" style="left:799px;top:151.5px;font-size:13.4px;color:#666;white-space:nowrap;width:91px;overflow:hidden">CMD</div>
<div class="a" style="left:899px;top:151.5px;font-size:13.4px;color:#666;white-space:nowrap;width:91px;overflow:hidden">RUNJVA</div>
<div class="a" style="left:150px;top:141px;width:1px;height:37px;background:#e5e9ee"></div>
<div class="a" style="left:250px;top:141px;width:1px;height:37px;background:#e5e9ee"></div>
<div class="a" style="left:370px;top:141px;width:1px;height:37px;background:#e5e9ee"></div>
<div class="a" style="left:470px;top:141px;width:1px;height:37px;background:#e5e9ee"></div>
<div class="a" style="left:690px;top:141px;width:1px;height:37px;background:#e5e9ee"></div>
<div class="a" style="left:790px;top:141px;width:1px;height:37px;background:#e5e9ee"></div>
<div class="a" style="left:890px;top:141px;width:1px;height:37px;background:#e5e9ee"></div>
<div class="a" style="left:990px;top:141px;width:1px;height:37px;background:#e5e9ee"></div>
<div class="a" style="left:0;top:178px;width:995px;height:37px;background:#fff;border-bottom:1px solid #e5e9ee"></div>
<div class="a" style="left:158.5px;top:191.5px;width:10px;height:10px;background:#5cb85c"></div>
<div class="a" style="left:172.5px;top:188.5px;font-size:14.2px;color:#666;white-space:nowrap">Active</div>
<div class="a" style="left:259px;top:188.5px;font-size:13.4px;color:#666;white-space:nowrap;width:111px;overflow:hidden">IEFFECT</div>
<div class="a" style="left:379px;top:188.5px;font-size:13.4px;color:#666;white-space:nowrap;width:91px;overflow:hidden">THDW</div>
<div class="a" style="left:479px;top:188.5px;font-size:13.4px;color:#666;white-space:nowrap;width:211px;overflow:hidden">628247/IEFFECT/MAPCLT</div>
<div class="a" style="left:699px;top:188.5px;font-size:13.4px;color:#666;white-space:nowrap;width:91px;overflow:hidden">BCI</div>
<div class="a" style="left:799px;top:188.5px;font-size:13.4px;color:#666;white-space:nowrap;width:91px;overflow:hidden">JVM</div>
<div class="a" style="left:899px;top:188.5px;font-size:13.4px;color:#666;white-space:nowrap;width:91px;overflow:hidden">com.menten</div>
<div class="a" style="left:150px;top:178px;width:1px;height:37px;background:#e5e9ee"></div>
<div class="a" style="left:250px;top:178px;width:1px;height:37px;background:#e5e9ee"></div>
<div class="a" style="left:370px;top:178px;width:1px;height:37px;background:#e5e9ee"></div>
<div class="a" style="left:470px;top:178px;width:1px;height:37px;background:#e5e9ee"></div>
<div class="a" style="left:690px;top:178px;width:1px;height:37px;background:#e5e9ee"></div>
<div class="a" style="left:790px;top:178px;width:1px;height:37px;background:#e5e9ee"></div>
<div class="a" style="left:890px;top:178px;width:1px;height:37px;background:#e5e9ee"></div>
<div class="a" style="left:990px;top:178px;width:1px;height:37px;background:#e5e9ee"></div>
<div class="a" style="left:0;top:215px;width:995px;height:37px;background:#f4f4f4;border-bottom:1px solid #e5e9ee"></div>
<div class="a" style="left:9px;top:225.5px;font-size:13.6px;letter-spacing:-0.45px;font-weight:bold;color:#585858;white-space:nowrap">EFFEMAIL</div>
<div class="a" style="left:158.5px;top:228.5px;width:10px;height:10px;background:#888"></div>
<div class="a" style="left:172.5px;top:225.5px;font-size:14.2px;color:#666;white-space:nowrap">Inactive</div>
<div class="a" style="left:150px;top:215px;width:1px;height:37px;background:#e5e9ee"></div>
<div class="a" style="left:250px;top:215px;width:1px;height:37px;background:#e5e9ee"></div>
<div class="a" style="left:370px;top:215px;width:1px;height:37px;background:#e5e9ee"></div>
<div class="a" style="left:470px;top:215px;width:1px;height:37px;background:#e5e9ee"></div>
<div class="a" style="left:690px;top:215px;width:1px;height:37px;background:#e5e9ee"></div>
<div class="a" style="left:790px;top:215px;width:1px;height:37px;background:#e5e9ee"></div>
<div class="a" style="left:890px;top:215px;width:1px;height:37px;background:#e5e9ee"></div>
<div class="a" style="left:990px;top:215px;width:1px;height:37px;background:#e5e9ee"></div>
<div class="a" style="left:0;top:252px;width:995px;height:37px;background:#fff;border-bottom:1px solid #e5e9ee"></div>
<div class="a" style="left:9px;top:262.5px;font-size:13.6px;letter-spacing:-0.45px;font-weight:bold;color:#585858;white-space:nowrap">EFFFTP</div>
<div class="a" style="left:158.5px;top:265.5px;width:10px;height:10px;background:#888"></div>
<div class="a" style="left:172.5px;top:262.5px;font-size:14.2px;color:#666;white-space:nowrap">Inactive</div>
<div class="a" style="left:150px;top:252px;width:1px;height:37px;background:#e5e9ee"></div>
<div class="a" style="left:250px;top:252px;width:1px;height:37px;background:#e5e9ee"></div>
<div class="a" style="left:370px;top:252px;width:1px;height:37px;background:#e5e9ee"></div>
<div class="a" style="left:470px;top:252px;width:1px;height:37px;background:#e5e9ee"></div>
<div class="a" style="left:690px;top:252px;width:1px;height:37px;background:#e5e9ee"></div>
<div class="a" style="left:790px;top:252px;width:1px;height:37px;background:#e5e9ee"></div>
<div class="a" style="left:890px;top:252px;width:1px;height:37px;background:#e5e9ee"></div>
<div class="a" style="left:990px;top:252px;width:1px;height:37px;background:#e5e9ee"></div>
<div class="a" style="left:0;top:289px;width:995px;height:37px;background:#f4f4f4;border-bottom:1px solid #e5e9ee"></div>
<div class="a" style="left:9px;top:299.5px;font-size:13.6px;letter-spacing:-0.45px;font-weight:bold;color:#585858;white-space:nowrap">EFFHTTP</div>
<div class="a" style="left:158.5px;top:302.5px;width:10px;height:10px;background:#888"></div>
<div class="a" style="left:172.5px;top:299.5px;font-size:14.2px;color:#666;white-space:nowrap">Inactive</div>
<div class="a" style="left:150px;top:289px;width:1px;height:37px;background:#e5e9ee"></div>
<div class="a" style="left:250px;top:289px;width:1px;height:37px;background:#e5e9ee"></div>
<div class="a" style="left:370px;top:289px;width:1px;height:37px;background:#e5e9ee"></div>
<div class="a" style="left:470px;top:289px;width:1px;height:37px;background:#e5e9ee"></div>
<div class="a" style="left:690px;top:289px;width:1px;height:37px;background:#e5e9ee"></div>
<div class="a" style="left:790px;top:289px;width:1px;height:37px;background:#e5e9ee"></div>
<div class="a" style="left:890px;top:289px;width:1px;height:37px;background:#e5e9ee"></div>
<div class="a" style="left:990px;top:289px;width:1px;height:37px;background:#e5e9ee"></div>
<div class="a" style="left:0;top:326px;width:995px;height:37px;background:#fff;border-bottom:1px solid #e5e9ee"></div>
<div class="a" style="left:9px;top:336.5px;font-size:13.6px;letter-spacing:-0.45px;font-weight:bold;color:#585858;white-space:nowrap">EFFOCSP</div>
<div class="a" style="left:158.5px;top:339.5px;width:10px;height:10px;background:#888"></div>
<div class="a" style="left:172.5px;top:336.5px;font-size:14.2px;color:#666;white-space:nowrap">Inactive</div>
<div class="a" style="left:150px;top:326px;width:1px;height:37px;background:#e5e9ee"></div>
<div class="a" style="left:250px;top:326px;width:1px;height:37px;background:#e5e9ee"></div>
<div class="a" style="left:370px;top:326px;width:1px;height:37px;background:#e5e9ee"></div>
<div class="a" style="left:470px;top:326px;width:1px;height:37px;background:#e5e9ee"></div>
<div class="a" style="left:690px;top:326px;width:1px;height:37px;background:#e5e9ee"></div>
<div class="a" style="left:790px;top:326px;width:1px;height:37px;background:#e5e9ee"></div>
<div class="a" style="left:890px;top:326px;width:1px;height:37px;background:#e5e9ee"></div>
<div class="a" style="left:990px;top:326px;width:1px;height:37px;background:#e5e9ee"></div>
<div class="a" style="left:0;top:363px;width:995px;height:37px;background:#f4f4f4;border-bottom:1px solid #e5e9ee"></div>
<div class="a" style="left:9px;top:373.5px;font-size:13.6px;letter-spacing:-0.45px;font-weight:bold;color:#585858;white-space:nowrap">EFFOFTP2</div>
<div class="a" style="left:158.5px;top:376.5px;width:10px;height:10px;background:#888"></div>
<div class="a" style="left:172.5px;top:373.5px;font-size:14.2px;color:#666;white-space:nowrap">Inactive</div>
<div class="a" style="left:150px;top:363px;width:1px;height:37px;background:#e5e9ee"></div>
<div class="a" style="left:250px;top:363px;width:1px;height:37px;background:#e5e9ee"></div>
<div class="a" style="left:370px;top:363px;width:1px;height:37px;background:#e5e9ee"></div>
<div class="a" style="left:470px;top:363px;width:1px;height:37px;background:#e5e9ee"></div>
<div class="a" style="left:690px;top:363px;width:1px;height:37px;background:#e5e9ee"></div>
<div class="a" style="left:790px;top:363px;width:1px;height:37px;background:#e5e9ee"></div>
<div class="a" style="left:890px;top:363px;width:1px;height:37px;background:#e5e9ee"></div>
<div class="a" style="left:990px;top:363px;width:1px;height:37px;background:#e5e9ee"></div>
<div class="a" style="left:0;top:400px;width:995px;height:37px;background:#fff;border-bottom:1px solid #e5e9ee"></div>
<div class="a" style="left:9px;top:410.5px;font-size:13.6px;letter-spacing:-0.45px;font-weight:bold;color:#585858;white-space:nowrap">EFFREPORT</div>
<div class="a" style="left:158.5px;top:413.5px;width:10px;height:10px;background:#888"></div>
<div class="a" style="left:172.5px;top:410.5px;font-size:14.2px;color:#666;white-space:nowrap">Inactive</div>
<div class="a" style="left:150px;top:400px;width:1px;height:37px;background:#e5e9ee"></div>
<div class="a" style="left:250px;top:400px;width:1px;height:37px;background:#e5e9ee"></div>
<div class="a" style="left:370px;top:400px;width:1px;height:37px;background:#e5e9ee"></div>
<div class="a" style="left:470px;top:400px;width:1px;height:37px;background:#e5e9ee"></div>
<div class="a" style="left:690px;top:400px;width:1px;height:37px;background:#e5e9ee"></div>
<div class="a" style="left:790px;top:400px;width:1px;height:37px;background:#e5e9ee"></div>
<div class="a" style="left:890px;top:400px;width:1px;height:37px;background:#e5e9ee"></div>
<div class="a" style="left:990px;top:400px;width:1px;height:37px;background:#e5e9ee"></div>
<div class="a" style="left:0;top:437px;width:995px;height:37px;background:#f4f4f4;border-bottom:1px solid #e5e9ee"></div>
<div class="a" style="left:9px;top:447.5px;font-size:13.6px;letter-spacing:-0.45px;font-weight:bold;color:#585858;white-space:nowrap">EFFSERVER</div>
<div class="a" style="left:158.5px;top:450.5px;width:10px;height:10px;background:#888"></div>
<div class="a" style="left:172.5px;top:447.5px;font-size:14.2px;color:#666;white-space:nowrap">Inactive</div>
<div class="a" style="left:150px;top:437px;width:1px;height:37px;background:#e5e9ee"></div>
<div class="a" style="left:250px;top:437px;width:1px;height:37px;background:#e5e9ee"></div>
<div class="a" style="left:370px;top:437px;width:1px;height:37px;background:#e5e9ee"></div>
<div class="a" style="left:470px;top:437px;width:1px;height:37px;background:#e5e9ee"></div>
<div class="a" style="left:690px;top:437px;width:1px;height:37px;background:#e5e9ee"></div>
<div class="a" style="left:790px;top:437px;width:1px;height:37px;background:#e5e9ee"></div>
<div class="a" style="left:890px;top:437px;width:1px;height:37px;background:#e5e9ee"></div>
<div class="a" style="left:990px;top:437px;width:1px;height:37px;background:#e5e9ee"></div>
<div class="a" style="left:0;top:474px;width:995px;height:37px;background:#fff;border-bottom:1px solid #e5e9ee"></div>
<div class="a" style="left:9px;top:484.5px;font-size:13.6px;letter-spacing:-0.45px;font-weight:bold;color:#585858;white-space:nowrap">EFFSERVICE</div>
<div class="a" style="left:158.5px;top:487.5px;width:10px;height:10px;background:#5cb85c"></div>
<div class="a" style="left:172.5px;top:484.5px;font-size:14.2px;color:#666;white-space:nowrap">Active</div>
<div class="a" style="left:259px;top:484.5px;font-size:13.4px;color:#666;white-space:nowrap;width:111px;overflow:hidden">QSYS</div>
<div class="a" style="left:379px;top:484.5px;font-size:13.4px;color:#666;white-space:nowrap;width:91px;overflow:hidden">DEQW</div>
<div class="a" style="left:479px;top:484.5px;font-size:13.4px;color:#666;white-space:nowrap;width:211px;overflow:hidden">626906/QSYS/EFFSERVICE</div>
<div class="a" style="left:699px;top:484.5px;font-size:13.4px;color:#666;white-space:nowrap;width:91px;overflow:hidden">SBS</div>
<div class="a" style="left:150px;top:474px;width:1px;height:37px;background:#e5e9ee"></div>
<div class="a" style="left:250px;top:474px;width:1px;height:37px;background:#e5e9ee"></div>
<div class="a" style="left:370px;top:474px;width:1px;height:37px;background:#e5e9ee"></div>
<div class="a" style="left:470px;top:474px;width:1px;height:37px;background:#e5e9ee"></div>
<div class="a" style="left:690px;top:474px;width:1px;height:37px;background:#e5e9ee"></div>
<div class="a" style="left:790px;top:474px;width:1px;height:37px;background:#e5e9ee"></div>
<div class="a" style="left:890px;top:474px;width:1px;height:37px;background:#e5e9ee"></div>
<div class="a" style="left:990px;top:474px;width:1px;height:37px;background:#e5e9ee"></div>
<div class="a" style="left:0;top:511px;width:995px;height:37px;background:#fff;border-bottom:1px solid #e5e9ee"></div>
<div class="a" style="left:158.5px;top:524.5px;width:10px;height:10px;background:#5cb85c"></div>
<div class="a" style="left:172.5px;top:521.5px;font-size:14.2px;color:#666;white-space:nowrap">Active</div>
<div class="a" style="left:259px;top:521.5px;font-size:13.4px;color:#666;white-space:nowrap;width:111px;overflow:hidden">IEFFECT</div>
<div class="a" style="left:379px;top:521.5px;font-size:13.4px;color:#666;white-space:nowrap;width:91px;overflow:hidden">TIMW</div>
<div class="a" style="left:479px;top:521.5px;font-size:13.4px;color:#666;white-space:nowrap;width:211px;overflow:hidden">626910/IEFFECT/EFFSERVICE</div>
<div class="a" style="left:699px;top:521.5px;font-size:13.4px;color:#666;white-space:nowrap;width:91px;overflow:hidden">ASJ</div>
<div class="a" style="left:799px;top:521.5px;font-size:13.4px;color:#666;white-space:nowrap;width:91px;overflow:hidden">CMD</div>
<div class="a" style="left:899px;top:521.5px;font-size:13.4px;color:#666;white-space:nowrap;width:91px;overflow:hidden">QSH</div>
<div class="a" style="left:150px;top:511px;width:1px;height:37px;background:#e5e9ee"></div>
<div class="a" style="left:250px;top:511px;width:1px;height:37px;background:#e5e9ee"></div>
<div class="a" style="left:370px;top:511px;width:1px;height:37px;background:#e5e9ee"></div>
<div class="a" style="left:470px;top:511px;width:1px;height:37px;background:#e5e9ee"></div>
<div class="a" style="left:690px;top:511px;width:1px;height:37px;background:#e5e9ee"></div>
<div class="a" style="left:790px;top:511px;width:1px;height:37px;background:#e5e9ee"></div>
<div class="a" style="left:890px;top:511px;width:1px;height:37px;background:#e5e9ee"></div>
<div class="a" style="left:990px;top:511px;width:1px;height:37px;background:#e5e9ee"></div>
<div class="a" style="left:0;top:548px;width:995px;height:37px;background:#fff;border-bottom:1px solid #e5e9ee"></div>
<div class="a" style="left:158.5px;top:561.5px;width:10px;height:10px;background:#5cb85c"></div>
<div class="a" style="left:172.5px;top:558.5px;font-size:14.2px;color:#666;white-space:nowrap">Active</div>
<div class="a" style="left:259px;top:558.5px;font-size:13.4px;color:#666;white-space:nowrap;width:111px;overflow:hidden">IEFFECT</div>
<div class="a" style="left:379px;top:558.5px;font-size:13.4px;color:#666;white-space:nowrap;width:91px;overflow:hidden">SELW</div>
<div class="a" style="left:479px;top:558.5px;font-size:13.4px;color:#666;white-space:nowrap;width:211px;overflow:hidden">627840/IEFFECT/QP0ZSPWT</div>
<div class="a" style="left:699px;top:558.5px;font-size:13.4px;color:#666;white-space:nowrap;width:91px;overflow:hidden">BCI</div>
<div class="a" style="left:799px;top:558.5px;font-size:13.4px;color:#666;white-space:nowrap;width:91px;overflow:hidden">JVM</div>
<div class="a" style="left:899px;top:558.5px;font-size:13.4px;color:#666;white-space:nowrap;width:91px;overflow:hidden">com.menten</div>
<div class="a" style="left:150px;top:548px;width:1px;height:37px;background:#e5e9ee"></div>
<div class="a" style="left:250px;top:548px;width:1px;height:37px;background:#e5e9ee"></div>
<div class="a" style="left:370px;top:548px;width:1px;height:37px;background:#e5e9ee"></div>
<div class="a" style="left:470px;top:548px;width:1px;height:37px;background:#e5e9ee"></div>
<div class="a" style="left:690px;top:548px;width:1px;height:37px;background:#e5e9ee"></div>
<div class="a" style="left:790px;top:548px;width:1px;height:37px;background:#e5e9ee"></div>
<div class="a" style="left:890px;top:548px;width:1px;height:37px;background:#e5e9ee"></div>
<div class="a" style="left:990px;top:548px;width:1px;height:37px;background:#e5e9ee"></div>
</div>
<div class="a" style="left:20px;top:619px;width:995px;height:16px;background:#f1f1f1"></div>
<div class="a" style="left:38px;top:620px;width:502px;height:14px;background:#cdcdcd"></div>
<svg class="a" style="left:23px;top:622px" width="10" height="10" viewBox="0 0 10 10"><path d="M6.5,1.8 L3.3,5 L6.5,8.2" stroke="#505050" stroke-width="2" fill="none"/></svg>
<svg class="a" style="left:1001px;top:622px" width="10" height="10" viewBox="0 0 10 10"><path d="M3.5,1.8 L6.7,5 L3.5,8.2" stroke="#505050" stroke-width="2" fill="none"/></svg>
<div class="a" style="left:1016px;top:55px;width:16px;height:580px;background:#f1f1f1"></div>
<div class="a" style="left:1017px;top:72px;width:14px;height:254px;background:#cdcdcd"></div>
<svg class="a" style="left:1019px;top:58px" width="10" height="10" viewBox="0 0 10 10"><path d="M1.8,6.5 L5,3.3 L8.2,6.5" stroke="#505050" stroke-width="2" fill="none"/></svg>
<svg class="a" style="left:1019px;top:605px" width="10" height="10" viewBox="0 0 10 10"><path d="M1.8,3.5 L5,6.7 L8.2,3.5" stroke="#505050" stroke-width="2" fill="none"/></svg>
<svg class="a" style="left:1039px;top:642px" width="8" height="8" viewBox="0 0 8 8"><path d="M6.5,1 V6.5 H1" stroke="#aaa" stroke-width="1.4" fill="none"/></svg>
</div>
<div class="a" style="left:926px;top:496px;width:200px;height:35px;background:rgba(0,0,0,0.10)"></div>
<svg class="a" style="left:932px;top:483px" width="14" height="8" viewBox="0 0 14 8"><path d="M1,8 L7,1 L13,8 Z" fill="#999"/></svg>
<div class="a" style="left:921px;top:490px;width:199px;height:35px;background:#fff;border:3px solid #e53e3e"></div>
<svg class="a" style="left:940px;top:501px" width="14" height="14" viewBox="0 0 14 14"><circle cx="7" cy="7" r="6" fill="#666"/><path d="M5.3,3.9 L10,7 L5.3,10.1 Z" fill="#fff"/></svg>
<div class="a" style="left:966px;top:500px;font-size:14px;color:#555;white-space:nowrap">Start subsystem *FTP</div>
<!--/PANELS-->
<div id="fbar" class="a"></div>
<div id="ftr" class="a">
<div class="a" style="left:20px;top:8px;white-space:nowrap;font-size:14px">i-effect<sup style="font-size:10px;vertical-align:0;position:relative;top:-5px">®</sup> WebControl</div>
<div class="a" style="right:20px;top:8px;white-space:nowrap;font-size:13.1px">i-effect: V2R8M0&nbsp; ::&nbsp; System: devp2:443&nbsp; ::&nbsp; Serial number: 785257X&nbsp; ::&nbsp; Partition: 10 (DEVP2)</div>
</div>
</body></html>
